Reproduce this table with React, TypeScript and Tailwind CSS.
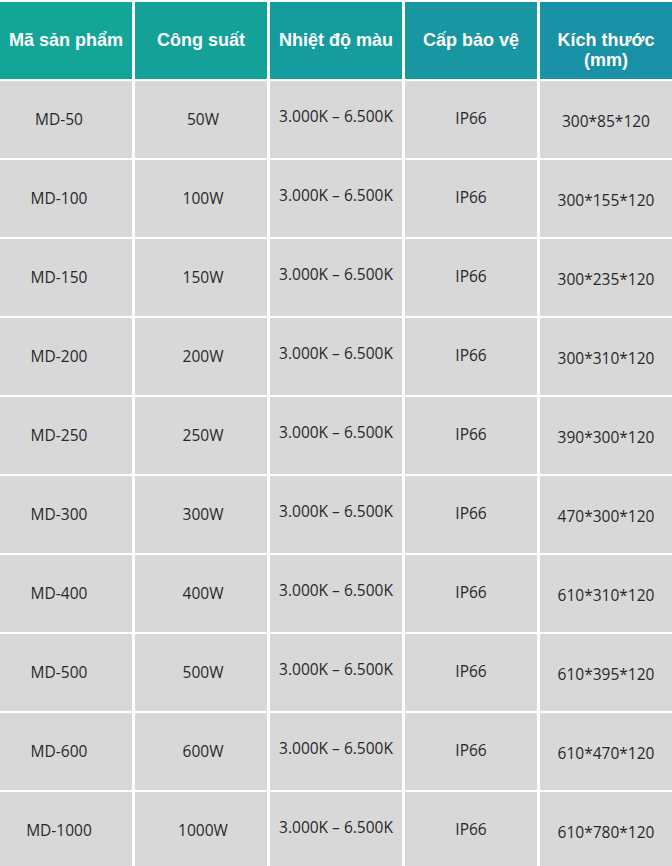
const headers: { label: string[]; }[] = [
  { label: ["Mã sản phẩm"] },
  { label: ["Công suất"] },
  { label: ["Nhiệt độ màu"] },
  { label: ["Cấp bảo vệ"] },
  { label: ["Kích thước", "(mm)"] },
];

const rows = [
  ["MD-50", "50W", "300*85*120"],
  ["MD-100", "100W", "300*155*120"],
  ["MD-150", "150W", "300*235*120"],
  ["MD-200", "200W", "300*310*120"],
  ["MD-250", "250W", "390*300*120"],
  ["MD-300", "300W", "470*300*120"],
  ["MD-400", "400W", "610*310*120"],
  ["MD-500", "500W", "610*395*120"],
  ["MD-600", "600W", "610*470*120"],
  ["MD-1000", "1000W", "610*780*120"],
];

const body = "flex h-[77px] items-center justify-center bg-[#d8d8d8] text-[15.5px] text-[#282828]";

export default function App() {
  return (
    <div className="h-[866px] w-[672px] overflow-hidden bg-white pt-[2px] font-['Open_Sans',sans-serif]">
      <div className="grid grid-cols-5 gap-x-[3px] gap-y-[2px]">
        {headers.map((h, i) => (
          <div
            key={i}
            className={
              "flex h-[77px] flex-col items-center pt-[28px] text-center font-['Liberation_Sans',sans-serif] text-[18px] font-bold leading-[20px] text-white " +
              ["bg-[#13a596]", "bg-[#14a19a]", "bg-[#169c9e]", "bg-[#1896a2]", "bg-[#1991a6]"][i]
            }
          >
            {h.label.map((l) => (
              <span key={l}>{l}</span>
            ))}
          </div>
        ))}
        {rows.map(([code, power, size]) => (
          <>
            <div key={code + "a"} className={body + " pr-[14px]"}>{code}</div>
            <div className={body + " pl-[4px]"}>{power}</div>
            <div className={body + " pb-[6px]"}>3.000K – 6.500K</div>
            <div className={body + " pb-[2px]"}>IP66</div>
            <div className={body + " pt-[4px]"}>{size}</div>
          </>
        ))}
      </div>
    </div>
  );
}
